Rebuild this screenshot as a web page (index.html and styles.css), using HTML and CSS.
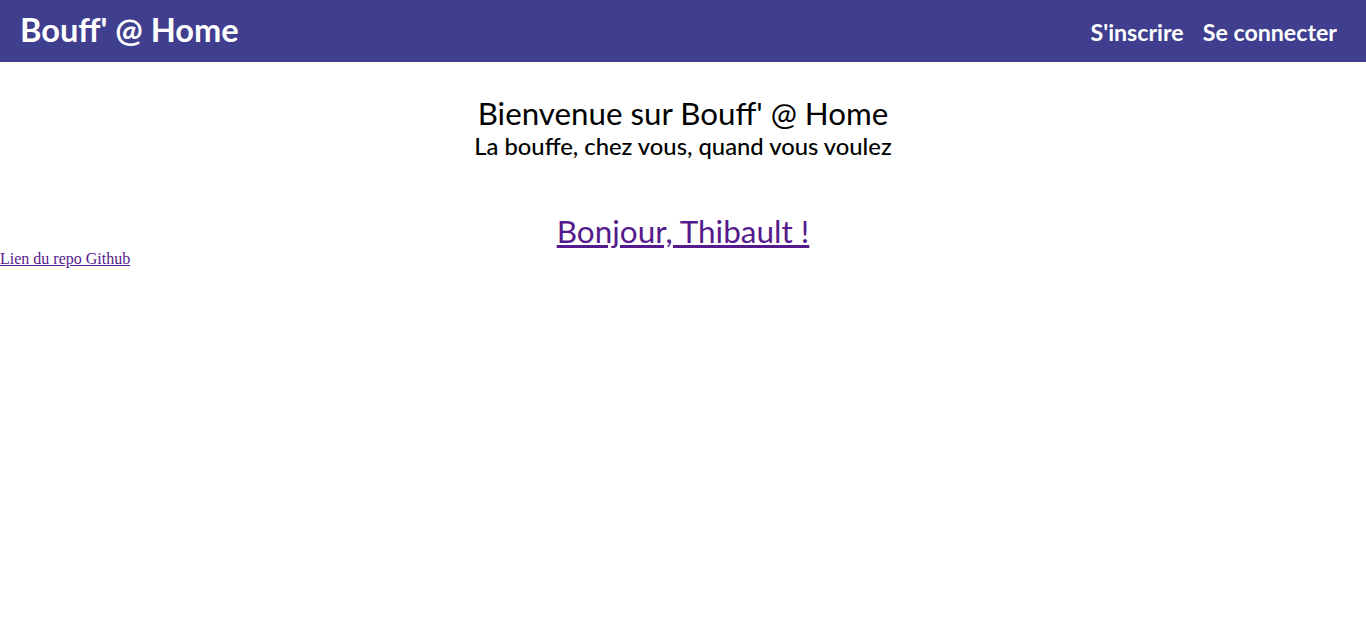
FILE: index.html
```html
<!DOCTYPE html>
<html lang="fr">
<head>
<meta charset="utf-8">
<title>Bouff' @ Home</title>
<link rel="stylesheet" href="styles.css">
</head>
<body>
<header class="topbar">
  <div class="brand">Bouff' @ Home</div>
  <nav class="nav">
    <a class="nav-link" href="#">S'inscrire</a>
    <a class="nav-link" href="#">Se connecter</a>
  </nav>
</header>
<main class="hero">
  <h1 class="hero-title">Bienvenue sur Bouff' @ Home</h1>
  <p class="hero-sub">La bouffe, chez vous, quand vous voulez</p>
  <a class="greet" href="#">Bonjour, Thibault !</a>
</main>
<a class="repo" href="#">Lien du repo Github</a>
</body>
</html>
```

FILE: styles.css
```css
html, body {
  margin: 0;
  padding: 0;
  background: #ffffff;
}
body {
  font-family: "Liberation Serif", "Times New Roman", serif;
  font-size: 16px;
}
.topbar {
  height: 62px;
  background: #3f3e8f;
  display: flex;
  align-items: center;
  justify-content: space-between;
  padding: 0 29px 0 20px;
  box-sizing: border-box;
  font-family: Lato, "Noto Sans", sans-serif;
  color: #ffffff;
}
.brand {
  font-size: 32.6px;
  font-weight: 700;
  line-height: 1;
  margin-top: -2px;
}
.nav {
  display: flex;
  gap: 19px;
  margin-top: 3px;
}
.nav-link {
  color: #ffffff;
  text-decoration: none;
  font-size: 23.2px;
  font-weight: 700;
  line-height: 1;
}
.hero {
  display: flex;
  flex-direction: column;
  align-items: center;
  font-family: Lato, "Noto Sans", sans-serif;
  color: #000000;
  padding-top: 32px;
}
.hero-title {
  margin: 0;
  font-size: 31.3px;
  font-weight: 400;
  line-height: 38px;
}
.hero-sub {
  margin: 0;
  font-size: 23.8px;
  font-weight: 500;
  line-height: 28px;
}
.greet {
  margin-top: 52px;
  font-size: 31.5px;
  line-height: 38px;
  color: #551a8b;
}
.repo {
  display: block;
  width: max-content;
  color: #551a8b;
  font-size: 16px;
  line-height: 18px;
}
```
